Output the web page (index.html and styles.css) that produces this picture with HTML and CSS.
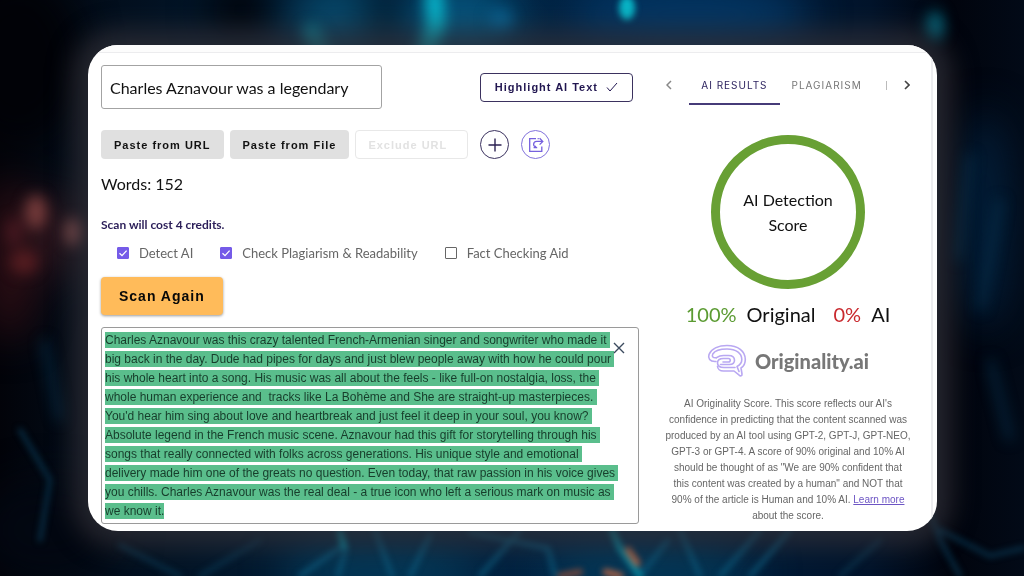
FILE: index.html
```html
<!DOCTYPE html>
<html lang="en">
<head>
<meta charset="utf-8">
<meta name="viewport" content="width=device-width, initial-scale=1">
<title>Originality.ai</title>
<link rel="stylesheet" href="styles.css">
</head>
<body>
<svg class="backdrop" viewBox="0 0 1024 576" preserveAspectRatio="xMidYMid slice" aria-hidden="true">
  <defs>
    <linearGradient id="sky" x1="0" x2="1" y1="0" y2="0">
      <stop offset="0" stop-color="#020309"/><stop offset=".12" stop-color="#03101f"/>
      <stop offset=".35" stop-color="#03213c"/><stop offset=".6" stop-color="#022344"/>
      <stop offset=".85" stop-color="#02142b"/><stop offset=".93" stop-color="#01040d"/><stop offset="1" stop-color="#020a17"/>
    </linearGradient>
    <filter id="wide" x="-50%" y="-50%" width="200%" height="200%" color-interpolation-filters="sRGB"><feGaussianBlur stdDeviation="20"/></filter>
    <filter id="soft" x="-50%" y="-50%" width="200%" height="200%" color-interpolation-filters="sRGB"><feGaussianBlur stdDeviation="7"/></filter>
    <filter id="fine" x="-50%" y="-50%" width="200%" height="200%" color-interpolation-filters="sRGB"><feGaussianBlur stdDeviation="3"/></filter>
  </defs>
  <rect width="1024" height="576" fill="url(#sky)"/>
  <g filter="url(#wide)">
    <ellipse cx="340" cy="20" rx="50" ry="40" fill="#07486a"/>
    <ellipse cx="460" cy="20" rx="60" ry="40" fill="#06537b"/>
    <ellipse cx="690" cy="15" rx="120" ry="35" fill="#043663"/>
    <ellipse cx="240" cy="10" rx="30" ry="30" fill="#010308"/>
    <ellipse cx="385" cy="18" rx="14" ry="30" fill="#020c19"/>
    <ellipse cx="20" cy="60" rx="60" ry="80" fill="#010207"/>
    <ellipse cx="10" cy="260" rx="26" ry="80" fill="#2c0e14"/>
    <ellipse cx="55" cy="235" rx="30" ry="40" fill="#28151d"/>
    <ellipse cx="985" cy="220" rx="24" ry="110" fill="#03203c"/>
    <ellipse cx="380" cy="570" rx="100" ry="26" fill="#053a59"/>
    <ellipse cx="650" cy="570" rx="110" ry="26" fill="#053a59"/>
    <ellipse cx="50" cy="530" rx="70" ry="50" fill="#020711"/>
  </g>
  <g filter="url(#soft)">
    <path d="M434 -10 436 26 424 60" stroke="#08b4ca" stroke-width="18" fill="none"/>
    <path d="M312 34 322 55" stroke="#0b8196" stroke-width="18" fill="none" stroke-linecap="round"/>
    <ellipse cx="500" cy="20" rx="12" ry="10" fill="#08608f"/>
    <ellipse cx="935" cy="26" rx="9" ry="15" fill="#066074"/>
    <ellipse cx="36" cy="212" rx="11" ry="17" fill="#743a3a"/>
    <ellipse cx="74" cy="232" rx="9" ry="14" fill="#804a4a"/>
    <ellipse cx="14" cy="232" rx="8" ry="14" fill="#461820"/>
    <ellipse cx="24" cy="262" rx="14" ry="12" fill="#541c20"/>
    <path d="M970 155 958 260M1000 200 980 310M990 360 1010 440M44 340 60 420" stroke="#063350" stroke-width="5" fill="none"/>
  </g>
  <ellipse cx="627" cy="8" rx="8" ry="12" fill="#08b6c8" filter="url(#fine)"/>
  <g filter="url(#fine)" fill="none" stroke-linecap="round" stroke-width="4">
    <path d="M340 530 346 548 338 576M300 576 342 546M480 576 520 530M430 535 410 576M555 576 548 548 470 532M720 576 760 530M790 530 750 576M680 530 700 576M375 530 392 576M640 576 668 540" stroke="#0a5678"/>
    <path d="M612 530 620 548 640 576M340 532 344 546" stroke="#078aa1" stroke-width="6"/>
    <path d="M940 530 990 556 1024 548M960 576 940 540 925 500M200 576 260 540M120 545 180 576M840 576 880 540M20 430 50 480 40 540" stroke="#08324b"/>
    <path d="M628 550 637 563M606 572 620 576" stroke="#a86146" stroke-width="7"/>
    <path d="M560 576 580 572" stroke="#7b493c" stroke-width="6"/>
  </g>
</svg>

<main class="card">
  <div class="card-strip"></div>
  <div class="card-body">
    <section class="editor">
      <div class="title-row">
        <input class="title-input" type="text" aria-label="Title" value="Charles Aznavour was a legendary singer">
        <button class="btn btn-outline" type="button">Highlight AI Text
          <svg width="12" height="10" viewBox="0 0 12 10" aria-hidden="true"><path d="M1 5.5 4 9 11 1" fill="none" stroke="currentColor"/></svg>
        </button>
      </div>

      <div class="toolbar">
        <button class="btn btn-grey" type="button">Paste from URL</button>
        <button class="btn btn-grey" type="button">Paste from File</button>
        <button class="btn btn-ghost" type="button" disabled>Exclude URL</button>
        <button class="round" type="button" aria-label="Add">
          <svg width="14" height="14" viewBox="0 0 14 14" aria-hidden="true"><path d="M7 .5v13M.5 7h13" fill="none" stroke="currentColor" stroke-width="1.4"/></svg>
        </button>
        <button class="round round-violet" type="button" aria-label="Share">
          <svg width="16" height="16" viewBox="0 0 16 16" fill="none" stroke="currentColor" stroke-width="1.3" aria-hidden="true"><path d="M8 1.700H1.700v12.600h12.100V9.500M9.600 1.700h1.200M5.600 10.700h3.600M8.200 9.300C4.600 10.600 4.800 4.400 8.600 4.400h5.800M11.600 1.200l3.200 3.200-3.200 3.200"/></svg>
        </button>
      </div>

      <p class="words">Words: 152</p>
      <p class="cost">Scan will cost 4 credits.</p>

      <div class="options">
        <label class="option"><input type="checkbox" checked>Detect AI</label>
        <label class="option"><input type="checkbox" checked>Check Plagiarism &amp; Readability</label>
        <label class="option"><input type="checkbox">Fact Checking Aid</label>
      </div>

      <button class="scan" type="button">Scan Again</button>

      <div class="text-box">
        <div class="text" role="textbox" aria-multiline="true" aria-label="Scanned text" contenteditable="true" spellcheck="false"><mark>Charles Aznavour was this crazy talented French-Armenian singer and songwriter who made it <br>big back in the day. Dude had pipes for days and just blew people away with how he could pour <br>his whole heart into a song. His music was all about the feels - like full-on nostalgia, loss, the <br>whole human experience and &nbsp;tracks like La Bohème and She are straight-up masterpieces. <br>You'd hear him sing about love and heartbreak and just feel it deep in your soul, you know? <br>Absolute legend in the French music scene. Aznavour had this gift for storytelling through his <br>songs that really connected with folks across generations. His unique style and emotional <br>delivery made him one of the greats no question. Even today, that raw passion in his voice gives <br>you chills. Charles Aznavour was the real deal - a true icon who left a serious mark on music as <br>we know it.</mark></div>
        <button class="clear" type="button" aria-label="Clear text">
          <svg width="12" height="12" viewBox="0 0 12 12" aria-hidden="true"><path d="M1 1l10 10M11 1 1 11" fill="none" stroke="currentColor" stroke-width="1.4"/></svg>
        </button>
      </div>
    </section>

    <aside class="results">
      <nav class="tabs" aria-label="Results">
        <button class="arrow arrow-dim" type="button" aria-label="Previous"><svg width="6" height="10" viewBox="0 0 6 10" aria-hidden="true"><path d="M5 1 1 5l4 4" fill="none" stroke="currentColor" stroke-width="1.5"/></svg></button>
        <div class="tab-list">
          <button class="tab tab-on" type="button">AI RESULTS</button>
          <button class="tab" type="button">PLAGIARISM</button>
          <span class="tab-more"></span>
        </div>
        <button class="arrow" type="button" aria-label="Next"><svg width="6" height="10" viewBox="0 0 6 10" aria-hidden="true"><path d="M1 1l4 4-4 4" fill="none" stroke="currentColor" stroke-width="1.6"/></svg></button>
      </nav>

      <div class="ring">AI Detection<br>Score</div>

      <p class="scores"><span class="good">100%</span><span>Original</span><span class="bad">0%</span><span>AI</span></p>

      <div class="brand">
        <svg width="40" height="34" viewBox="0 0 40 34" fill="none" stroke="#b9a8f2" stroke-width="1.6" stroke-linecap="round" stroke-linejoin="round" aria-hidden="true">
          <path d="M9 17.500C2.500 18 .8 14 2 10.500 4.500 4.500 12 1.500 20 1.500c11 0 18.300 5.500 18.300 14 0 4.500-1.800 7-4.300 8.500l1 6c.2 2-1.600 2.400-2.800 1.200L27 27H16.500c-3.500 0-6-2-6-4.700"/>
          <path d="M9.500 13.700c-3.500.5-5-1-3.700-3.700C8 6.500 13.500 5 20 5c9 0 14.800 4 14.800 10.500 0 3.500-1.800 5.500-4.800 7l2 5"/>
          <path d="M28 23.500H17c-4 0-6.500-1.500-6.500-4.500s2.500-4.500 6-4.500h5c2.300 0 2.300 3.500 0 3.500H16"/>
          <path d="M13.500 20.500h9c3.500 0 5-2 5-4.200 0-3-2.500-4.800-6-4.800h-5c-3 0-5 .8-7 2.200"/>
        </svg>
        <span>Originality.ai</span>
      </div>

      <p class="about">AI Originality Score. This score reflects our AI's<br>confidence in predicting that the content scanned was<br>produced by an AI tool using GPT-2, GPT-J, GPT-NEO,<br>GPT-3 or GPT-4. A score of 90% original and 10% AI<br>should be thought of as "We are 90% confident that<br>this content was created by a human" and NOT that<br>90% of the article is Human and 10% AI. <a href="#">Learn more</a><br>about the score.</p>
    </aside>
  </div>
</main>
</body>
</html>
```
FILE: styles.css
```css
* { box-sizing: border-box; }

body {
  margin: 0;
  min-height: 100vh;
  padding: 45px 87px 45px 88px;
  display: flex;
  background: #020814;
  color: #111;
  font-family: Lato, "Liberation Sans", sans-serif;
}

button, input { font: inherit; color: inherit; }
button { margin: 0; padding: 0; border: 0; background: none; cursor: pointer; }
p { margin: 0; }

.backdrop {
  position: fixed;
  inset: 0;
  width: 100%;
  height: 100%;
  z-index: -1;
}

.card {
  flex: 1;
  display: flex;
  flex-direction: column;
  background: #fff;
  border-radius: 30px;
  overflow: hidden;
  box-shadow: 0 0 24px 16px rgba(50, 49, 56, .7);
}

.card-strip { height: 8px; background: #fcfcfc; border-bottom: 1px solid #ececee; }

.card-body {
  flex: 1;
  display: flex;
  justify-content: space-between;
  gap: 23px;
  margin-right: 4px;
  padding: 12px 17px 7px 13px;
  border-right: 2px solid #ededf0;
}

.editor { flex: 1; max-width: 720px; display: flex; flex-direction: column; align-items: flex-start; }

.title-row {
  align-self: stretch;
  display: flex;
  align-items: center;
  justify-content: space-between;
  padding-right: 6px;
}

.title-input {
  width: 281px;
  height: 44px;
  padding: 0 30px 0 8px;
  border: 1px solid #a3a3a3;
  border-radius: 3px;
  background: #fff;
  font-size: 16px;
}

.btn {
  height: 29px;
  padding: 0 12px;
  border: 1px solid transparent;
  border-radius: 4px;
  font-family: "Liberation Sans", sans-serif;
  font-size: 11px;
  font-weight: 700;
  letter-spacing: 1px;
  white-space: nowrap;
}
.btn-outline { display: flex; align-items: center; gap: 8px; padding: 0 14px; border-color: #3b325f; color: #211650; }
.btn-grey { background: #e0e0e0; }
.btn-ghost { border-color: #e8e8e8; color: #e2e2e2; padding-right: 20px; }

.toolbar { display: flex; gap: 6px; margin-top: 21px; }

.round {
  width: 29px;
  height: 29px;
  margin-left: 6px;
  display: grid;
  place-items: center;
  border: 1px solid #3b325f;
  border-radius: 50%;
  color: #2b2152;
}
.round-violet { border-color: #8272dc; color: #7560de; }

.words { margin-top: 15px; font-size: 16px; line-height: 20px; }
.cost { margin-top: 23px; font-size: 12px; line-height: 16px; font-weight: 700; color: #2a1d58; }

.options { display: flex; gap: 27px; margin-top: 12px; padding-left: 16px; }
.option { display: flex; align-items: center; gap: 10px; font-size: 13px; line-height: 16px; color: #666; }
.option input {
  appearance: none;
  width: 12px;
  height: 12px;
  margin: 0;
  border: 1px solid #666;
  border-radius: 1px;
}
.option input:checked {
  border-color: #755be8;
  background: #755be8 url("data:image/svg+xml,%3Csvg xmlns='http://www.w3.org/2000/svg' viewBox='0 0 10 10'%3E%3Cpath d='M1.500 5.200 4 7.600 8.600 2.600' fill='none' stroke='white' stroke-width='1.300'/%3E%3C/svg%3E") center / 10px 10px no-repeat;
}

.scan {
  height: 38px;
  margin-top: 16px;
  padding: 0 18px;
  border-radius: 4px;
  background: #ffbb5a;
  box-shadow: 0 1px 3px rgba(0, 0, 0, .4);
  color: #080808;
  font-family: "Liberation Sans", sans-serif;
  font-size: 14px;
  font-weight: 700;
  letter-spacing: 1px;
}

.text-box {
  align-self: stretch;
  position: relative;
  flex: 1;
  margin-top: 12px;
  padding: 3px 3px 2px;
  border: 1px solid #9a9a9a;
  border-radius: 3px;
}
.text { font-family: "Liberation Sans", sans-serif; font-size: 12px; line-height: 19px; white-space: pre; outline: 0; }
.text mark { padding: 1px 0; background: #5abe8c; color: #173d2b; }

.clear { position: absolute; top: 14px; right: 13px; color: #3b4a5e; line-height: 0; }

.results { flex: 0 0 252px; display: flex; flex-direction: column; align-items: center; }

.tabs { align-self: stretch; display: flex; align-items: center; justify-content: space-between; height: 40px; }
.tab-list { display: flex; align-items: center; }
.tab {
  height: 40px;
  padding: 2px 12px 0;
  border-bottom: 2px solid transparent;
  color: #777;
  font-family: Inter, sans-serif;
  font-size: 10px;
  letter-spacing: 1px;
}
.tab-on { border-color: #463b78; color: #2d235f; }
.tab-more { width: 1px; height: 9px; margin-left: 12px; background: #bbb; }
.arrow { line-height: 0; padding: 4px; color: #444; }
.arrow-dim { color: #888; }

.ring {
  width: 154px;
  height: 154px;
  margin-top: 30px;
  border: 9px solid #68a034;
  border-radius: 50%;
  display: grid;
  place-content: center;
  text-align: center;
  font-size: 16px;
  line-height: 25px;
}

.scores { display: flex; margin-top: 13px; font-size: 20px; line-height: 24px; gap: 10px; }
.good { color: #5b9b32; }
.bad { color: #c92a2f; margin-left: 8px; }

.brand { display: flex; align-items: center; gap: 8px; margin-top: 18px; color: #777; font-size: 20px; font-weight: 900; }

.about { margin-top: 18px; font-family: "Liberation Sans", sans-serif; font-size: 10px; line-height: 16px; text-align: center; color: #666; white-space: nowrap; }
.about a { color: #6d55c4; }
```
